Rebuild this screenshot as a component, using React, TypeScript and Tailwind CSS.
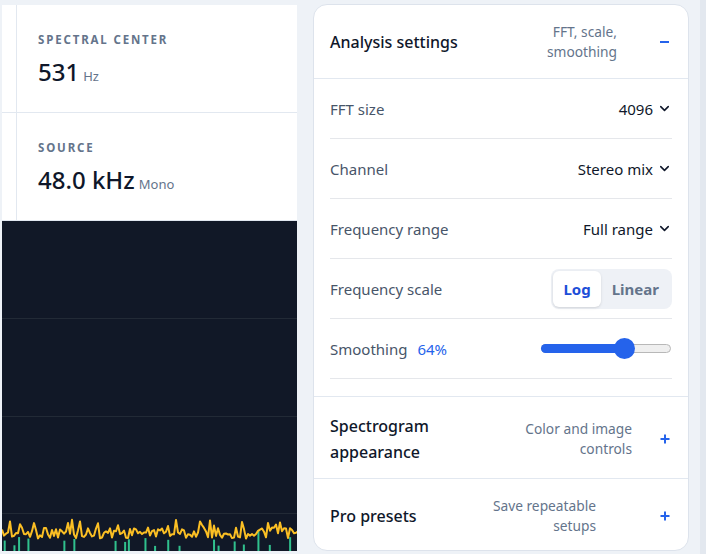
import { ChevronDown } from "lucide-react";

const rnd = (i: number) => {
  const x = Math.sin(i * 12.9898 + 78.233) * 43758.5453;
  return x - Math.floor(x);
};

const WAVE = Array.from({ length: 150 }, (_, i) => {
  const r = rnd(i);
  let y = 312 + (r - 0.5) * 11;
  if (rnd(i + 500) > 0.88) y -= 9;
  return `${(i * 2).toFixed(1)},${y.toFixed(1)}`;
}).join(" ");

const BARS = Array.from({ length: 60 }, (_, i) => {
  const r = rnd(i + 1000);
  const h = r > 0.92 ? 18 + rnd(i + 2000) * 10 : 4 + rnd(i + 3000) * 10;
  return { x: i * 5 + rnd(i + 4000) * 3, h, show: rnd(i + 5000) > 0.62 };
});

function Spectrum() {
  return (
    <div className="flex-1 bg-[#111827] overflow-hidden">
      <svg width="295" height="330" viewBox="0 0 295 330">
        {[97, 195, 292].map((y) => (
          <line key={y} x1="0" x2="295" y1={y + 0.5} y2={y + 0.5} stroke="#222a36" strokeWidth="1" />
        ))}
        {BARS.filter((b) => b.show).map((b, i) => (
          <rect key={i} x={b.x} y={330 - b.h} width="2" height={b.h} fill="#34d399" opacity="0.9" />
        ))}
        <polyline points={WAVE} fill="none" stroke="#fbbf24" strokeWidth="2" strokeLinejoin="round" />
      </svg>
    </div>
  );
}

function Stat({ label, value, unit }: { label: string; value: string; unit: string }) {
  return (
    <div className="h-[108px] border-b border-[#e2e8f0] pl-[21px] pt-[27px]">
      <div className="text-[11.5px] leading-4 font-bold tracking-[0.16em] text-[#64748b]">{label}</div>
      <div className="mt-2 flex items-baseline gap-1 text-[#0f172a]">
        <span className="text-[24px] leading-8 font-medium">{value}</span>
        <span className="text-[13px] text-[#64748b]">{unit}</span>
      </div>
    </div>
  );
}

function SelectRow({ label, value }: { label: string; value: string }) {
  return (
    <div className="h-[60px] border-b border-[#e5e7eb] flex items-center justify-between">
      <span className="text-[15px] text-[#475569]">{label}</span>
      <span className="flex items-center gap-1 text-[15px] text-[#0f172a]">
        {value}
        <ChevronDown size={15} strokeWidth={2.5} />
      </span>
    </div>
  );
}

function PlusIcon() {
  return (
    <svg width="10" height="10" viewBox="0 0 10 10" className="text-[#2563eb]">
      <path d="M5 0.5v9M0.5 5h9" stroke="currentColor" strokeWidth="2" />
    </svg>
  );
}

function Section({
  title,
  sub,
  subClass,
  titleClass,
  h,
}: {
  title: string;
  sub: string;
  subClass: string;
  titleClass: string;
  h: string;
}) {
  return (
    <div className={`${h} border-t border-[#e2e8f0] px-4 pt-1 flex items-center`}>
      <div className={`flex-1 text-[16px] leading-[26px] font-medium text-[#0f172a] ${titleClass}`}>{title}</div>
      <div className={`text-right text-[13.75px] leading-5 text-[#64748b] ${subClass}`}>{sub}</div>
      <div className="w-[12px] flex justify-start">
        <PlusIcon />
      </div>
    </div>
  );
}

export default function App() {
  return (
    <div className="w-[706px] h-[554px] bg-[#eef2f7] flex pt-[5px] pb-[3px] pl-[2px] overflow-hidden font-['Noto_Sans',sans-serif]">
      <div className="w-[295px] bg-white flex flex-col">
        <div className="grid grid-cols-[15px_1fr]">
          <div className="border-r border-b border-[#e2e8f0]" />
          <div>
            <Stat label="SPECTRAL CENTER" value="531" unit="Hz" />
          </div>
          <div className="border-r border-b border-[#e2e8f0]" />
          <div>
            <Stat label="SOURCE" value="48.0 kHz" unit="Mono" />
          </div>
        </div>
        <Spectrum />
      </div>

      <div className="ml-4 -mt-px w-[376px] bg-white border border-[#dde3ec] rounded-[14px] overflow-hidden flex flex-col">
        <div className="h-[75px] border-b border-[#e2e8f0] px-4 flex items-center">
          <div className="flex-1 text-[16px] font-medium text-[#0f172a]">Analysis settings</div>
          <div className="w-[80px] text-right text-[13.75px] leading-5 text-[#64748b] mr-[43px]">FFT, scale, smoothing</div>
          <div className="w-[12px]">
            <div className="w-[9px] h-[2px] bg-[#2563eb]" />
          </div>
        </div>
        <div className="px-4 pb-[17px]">
          <SelectRow label="FFT size" value="4096" />
          <SelectRow label="Channel" value="Stereo mix" />
          <SelectRow label="Frequency range" value="Full range" />
          <div className="h-[60px] border-b border-[#e5e7eb] flex items-center justify-between">
            <span className="text-[15px] text-[#475569]">Frequency scale</span>
            <div className="flex p-[2px] bg-[#eef1f6] rounded-lg">
              <button type="button" className="h-[36px] px-[10px] rounded-md bg-white shadow-sm text-[15px] font-bold text-[#1d4ed8]">
                Log
              </button>
              <button type="button" className="h-[36px] px-[11px] text-[15px] font-bold text-[#64748b]">
                Linear
              </button>
            </div>
          </div>
          <div className="h-[60px] border-b border-[#e5e7eb] flex items-center justify-between">
            <span className="text-[15px] text-[#475569]">
              Smoothing <span className="ml-1.5 text-[#2563eb]">64%</span>
            </span>
            <div className="relative w-[130px] h-[9px] mr-[1px] rounded-full bg-[#efefef] border border-[#b8b8b8]">
              <div className="absolute -left-px -top-px h-[9px] w-[84px] rounded-full bg-[#2563eb]" />
              <div className="absolute left-[72px] top-[-7px] w-[21px] h-[21px] rounded-full bg-[#2563eb]" />
            </div>
          </div>
        </div>
        <Section
          h="h-[82px]"
          title="Spectrogram appearance"
          titleClass="w-[120px]"
          sub="Color and image controls"
          subClass="w-[112px] mr-[28px]"
        />
        <Section
          h="h-[73px]"
          title="Pro presets"
          titleClass=""
          sub="Save repeatable setups"
          subClass="w-[108px] mr-[64px]"
        />
      </div>
      <div className="ml-auto w-[6px] -mt-[5px] -mb-[3px] bg-[#e3e8ef]" />
    </div>
  );
}
